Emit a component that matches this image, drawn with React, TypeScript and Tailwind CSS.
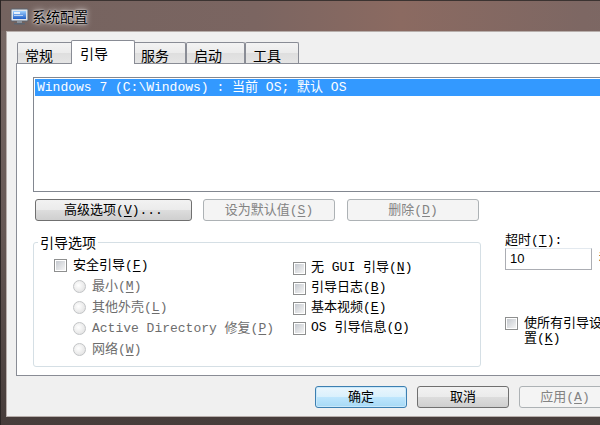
import React from "react";

const mono = "font-['Liberation_Mono','Noto_Sans_CJK_SC',monospace]";

const K = ({ k }: { k: string }) => <span className="underline underline-offset-2">{k}</span>;

const Checkbox = () => (
  <span className="inline-block w-[13px] h-[13px] shrink-0 border border-[#8e8f8f] bg-white p-px">
    <span className="block w-full h-full bg-[linear-gradient(135deg,#c5c9cf,#f4f4f4)]" />
  </span>
);

const Radio = () => (
  <span className="inline-block w-[13px] h-[13px] shrink-0 rounded-full border border-[#c2c4c6] bg-[radial-gradient(circle_at_40%_40%,#ffffff,#dcdcdc)]" />
);

type BtnProps = { children: React.ReactNode; w: string; disabled?: boolean; primary?: boolean };

const Button = ({ children, w, disabled, primary }: BtnProps) => {
  let look =
    "border-[#707070] bg-[linear-gradient(#f2f2f2,#ebebeb_50%,#dddddd_50%,#cfcfcf)] text-black";
  if (primary)
    look =
      "border-[#3c7fb1] bg-[linear-gradient(#eaf6fd,#d9f0fc_50%,#bee6fd_50%,#a7d9f5)] text-black shadow-[inset_0_0_0_1px_#c9e8fa]";
  if (disabled) look = "border-[#adb2b5] bg-[#f4f4f4] text-[#838383]";
  return (
    <div className={`${w} h-[22px] rounded-[3px] border flex items-center justify-center text-[13px] leading-none ${look}`}>
      {children}
    </div>
  );
};

const Tab = ({ label, w, active }: { label: string; w: string; active?: boolean }) =>
  active ? (
    <div className={`${w} h-[24px] -mb-px -mx-[2px] relative z-10 bg-white border border-b-0 border-[#898c95] rounded-t-[2px] pl-[8px] pt-[3px] text-[14px] leading-[18px]`}>
      {label}
    </div>
  ) : (
    <div className={`${w} h-[21px] border border-b-0 border-[#898c95] rounded-t-[2px] bg-[linear-gradient(#f3f3f3,#ebebeb_50%,#dedede_50%,#e5e5e5)] pl-[7px] pt-[3px] text-[14px] leading-[18px]`}>
      {label}
    </div>
  );

const MsconfigIcon = () => (
  <svg width="19" height="17" viewBox="0 0 19 17">
    <defs>
      <linearGradient id="scr" x1="0" y1="0" x2="0" y2="1">
        <stop offset="0" stopColor="#9fd0ff" />
        <stop offset="1" stopColor="#1f5fc8" />
      </linearGradient>
    </defs>
    <rect x="1" y="1" width="17" height="12" rx="1" fill="#dfe4ea" stroke="#5b6470" />
    <rect x="3" y="3" width="13" height="8" fill="url(#scr)" />
    <rect x="4" y="4" width="6" height="2" fill="#ffffff" opacity="0.8" />
    <rect x="4" y="7" width="9" height="1" fill="#ffffff" opacity="0.6" />
    <rect x="7" y="13" width="5" height="2" fill="#8a929c" />
    <rect x="4" y="15" width="11" height="1.5" fill="#5b6470" />
  </svg>
);

export default function App() {
  return (
    <div className="w-[600px] h-[425px] overflow-hidden bg-[#3a3230]">
      <div className="w-[728px] h-[425px] flex flex-col border-l border-[#2b2524] bg-[linear-gradient(180deg,#7a6b67,#655754_55%,#463c3a)]">
        {/* title bar */}
        <div className="h-[31px] shrink-0 flex items-center gap-[3px] pl-[9px] border-t border-[#3b3331] bg-[linear-gradient(90deg,#74635f,#7b6561_35%,#8b6a61_55%,#7d6763_80%,#7a6a66)]">
          <MsconfigIcon />
          <span className="text-[14px] text-black font-['Noto_Sans_CJK_SC',sans-serif] [text-shadow:0_0_6px_#ffffff,0_0_2px_#ffffff]">
            系统配置
          </span>
        </div>

        {/* client */}
        <div className="flex-1 ml-[5px] mb-[8px] border border-[#b7aeab] bg-[#f0f0f0] pt-[8px] pl-[9px] pr-[9px] flex flex-col text-black">
          <div className={`flex flex-col ${mono}`}>
            {/* tabs */}
            <div className="flex items-end h-[23px] ml-[1px] relative z-10 font-['Noto_Sans_CJK_SC',sans-serif]">
              <Tab label="常规" w="w-[56px]" />
              <Tab label="引导" w="w-[64px]" active />
              <Tab label="服务" w="w-[53px]" />
              <Tab label="启动" w="w-[59px]" />
              <Tab label="工具" w="w-[54px]" />
            </div>

            {/* tab panel */}
            <div className="h-[313px] border border-[#898c95] bg-white pt-[13px] px-[16px] flex flex-col">
              <div className="h-[115px] border border-[#828790] bg-white p-px">
                <div className="h-[17px] bg-[#3399ff] text-white text-[13px] leading-[17px] pl-[2px] whitespace-nowrap">
                  Windows 7 (C:\Windows) : 当前 OS; 默认 OS
                </div>
              </div>

              <div className="mt-[7px] flex gap-[11px] pl-[2px]">
                <Button w="w-[157px]">
                  高级选项(<K k="V" />)...
                </Button>
                <Button w="w-[132px]" disabled>
                  设为默认值(<K k="S" />)
                </Button>
                <div className="ml-px">
                  <Button w="w-[132px]" disabled>
                    删除(<K k="D" />)
                  </Button>
                </div>
              </div>

              <div className="mt-[13px] flex text-[13px]">
                <fieldset className="w-[448px] h-[133px] border border-[#d5dfe5] rounded-[3px]">
                  <legend className="ml-[4px] px-[2px] leading-[16px] text-[14px] font-['Noto_Sans_CJK_SC',sans-serif]">
                    引导选项
                  </legend>
                  <div className="flex pt-[5px]">
                    <div className="w-[259px] pl-[20px] flex flex-col">
                      <div className="h-[21px] flex items-center gap-[6px]">
                        <Checkbox />
                        <span>
                          安全引导(<K k="F" />)
                        </span>
                      </div>
                      <div className="pl-[19px] flex flex-col text-[#6d6d6d]">
                        <div className="h-[21px] flex items-center gap-[6px]">
                          <Radio />
                          <span>
                            最小(<K k="M" />)
                          </span>
                        </div>
                        <div className="h-[21px] flex items-center gap-[6px]">
                          <Radio />
                          <span>
                            其他外壳(<K k="L" />)
                          </span>
                        </div>
                        <div className="h-[21px] flex items-center gap-[6px]">
                          <Radio />
                          <span className="whitespace-nowrap">
                            Active Directory 修复(<K k="P" />)
                          </span>
                        </div>
                        <div className="h-[21px] flex items-center gap-[6px]">
                          <Radio />
                          <span>
                            网络(<K k="W" />)
                          </span>
                        </div>
                      </div>
                    </div>
                    <div className="flex flex-col pt-[3px]">
                      <div className="h-[20px] flex items-center gap-[5px]">
                        <Checkbox />
                        <span className="whitespace-nowrap">
                          无 GUI 引导(<K k="N" />)
                        </span>
                      </div>
                      <div className="h-[20px] flex items-center gap-[5px]">
                        <Checkbox />
                        <span>
                          引导日志(<K k="B" />)
                        </span>
                      </div>
                      <div className="h-[20px] flex items-center gap-[5px]">
                        <Checkbox />
                        <span>
                          基本视频(<K k="E" />)
                        </span>
                      </div>
                      <div className="h-[20px] flex items-center gap-[5px]">
                        <Checkbox />
                        <span className="whitespace-nowrap">
                          OS 引导信息(<K k="O" />)
                        </span>
                      </div>
                    </div>
                  </div>
                </fieldset>

                <div className="ml-[24px] flex flex-col">
                  <div className="h-[14px] leading-[14px]">
                    超时(<K k="T" />):
                  </div>
                  <div className="flex items-center">
                    <div className="w-[87px] h-[22px] border border-[#abadb3] border-t-[#e3e9ef] bg-white pl-[4px] leading-[20px] font-['Liberation_Sans',sans-serif]">
                      10
                    </div>
                    <span className="ml-[7px]">秒</span>
                  </div>
                  <div className="mt-[47px] flex items-start gap-[6px]">
                    <Checkbox />
                    <span className="leading-[15px] -mt-px">
                      使所有引导设置成为永久设
                      <br />
                      置(<K k="K" />)
                    </span>
                  </div>
                </div>
              </div>
            </div>

            {/* dialog buttons */}
            <div className="mt-[10px] pl-[299px] flex gap-[10px]">
              <Button w="w-[92px]" primary>
                确定
              </Button>
              <Button w="w-[92px]">取消</Button>
              <Button w="w-[92px]" disabled>
                应用(<K k="A" />)
              </Button>
              <Button w="w-[92px]">帮助</Button>
            </div>
          </div>
        </div>
      </div>
    </div>
  );
}
